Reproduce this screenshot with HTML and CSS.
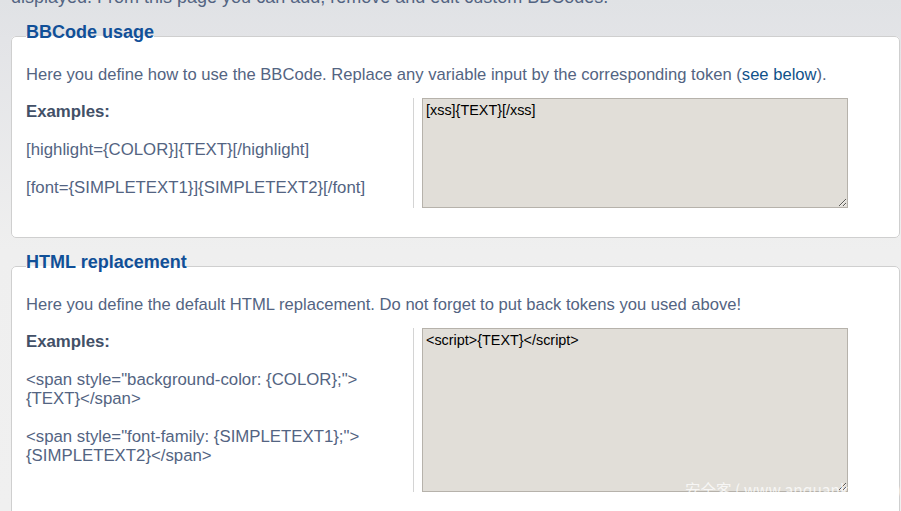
FILE: index.html
```html
<!DOCTYPE html>
<html lang="en">
<head>
<meta charset="utf-8">
<title>BBCodes</title>
<link rel="stylesheet" href="styles.css">
</head>
<body>
<div class="page">
  <p class="intro">displayed. From this page you can add, remove and edit custom BBCodes.</p>

  <fieldset class="panel">
    <legend class="panel-title">BBCode usage</legend>
    <p class="explain">Here you define how to use the BBCode. Replace any variable input by the corresponding token (<a href="#tokens" class="link">see below</a>).</p>
    <dl class="row">
      <dt class="row-label">
        <span class="label-title">Examples:</span><br><br>
        [highlight={COLOR}]{TEXT}[/highlight]<br><br>
        [font={SIMPLETEXT1}]{SIMPLETEXT2}[/font]
      </dt>
      <dd class="row-field"><textarea class="code code-short">[xss]{TEXT}[/xss]</textarea></dd>
    </dl>
  </fieldset>

  <fieldset class="panel">
    <legend class="panel-title">HTML replacement</legend>
    <p class="explain">Here you define the default HTML replacement. Do not forget to put back tokens you used above!</p>
    <dl class="row">
      <dt class="row-label">
        <span class="label-title">Examples:</span><br><br>
        &lt;span style="background-color: {COLOR};"&gt;<br>{TEXT}&lt;/span&gt;<br><br>
        &lt;span style="font-family: {SIMPLETEXT1};"&gt;<br>{SIMPLETEXT2}&lt;/span&gt;
      </dt>
      <dd class="row-field"><textarea class="code code-tall">&lt;script&gt;{TEXT}&lt;/script&gt;</textarea></dd>
    </dl>
  </fieldset>
</div>
<div class="watermark">安全客 ( www.anquanke.com )</div>
</body>
</html>
```
FILE: styles.css
```css
html, body {
  margin: 0;
  padding: 0;
  height: 100%;
  overflow: hidden;
}
body {
  font-family: "Liberation Sans", Arial, sans-serif;
  font-size: 16.8px;
  line-height: 19px;
  color: #536482;
  background: linear-gradient(#e0e2e5 0px, #e3e4e7 40px, #efefef 250px, #f0f0f0 100%);
  position: relative;
}
.page {
  padding: 0 1px 0 11px;
}
.intro {
  margin: -12px 0 14px 0;
  font-size: 18px;
  white-space: nowrap;
}
.panel {
  margin: 0 0 13px 0;
  padding: 14px 14px 29px 14px;
  border: 1px solid #cfcfcf;
  border-radius: 5px;
  background: #ffffff;
  min-width: 0;
}
.panel-title {
  padding: 0 0 8px 0;
  font-size: 18px;
  line-height: 22px;
  font-weight: bold;
  color: #115098;
}
.explain {
  margin: 0 0 14px 0;
  font-size: 16.6px;
}
.link {
  color: #105289;
  text-decoration: none;
}
.row {
  display: flex;
  margin: 0;
}
.row-label {
  width: 387px;
  flex: none;
  padding-top: 4px;
}
.label-title {
  font-weight: bold;
  color: #425067;
}
.row-field {
  margin: 0;
  padding-left: 8px;
  border-left: 1px solid #d4d4d4;
  flex: 1;
  display: flex;
}
.code {
  display: block;
  box-sizing: border-box;
  width: 426px;
  margin: 0;
  padding: 3px 3px;
  font-family: "Liberation Sans", Arial, sans-serif;
  font-size: 14.4px;
  line-height: 17px;
  color: #000000;
  background: #e1ded8;
  border: 1px solid #b6b2ab;
  border-radius: 0;
  resize: both;
}
.code-short {
  height: 110px;
}
.code-tall {
  height: 164px;
}
.watermark {
  position: absolute;
  left: 685px;
  top: 480px;
  font-family: "Noto Sans CJK SC", "Liberation Sans", sans-serif;
  font-size: 15.5px;
  color: rgba(255, 255, 255, 0.75);
  white-space: nowrap;
}
```
